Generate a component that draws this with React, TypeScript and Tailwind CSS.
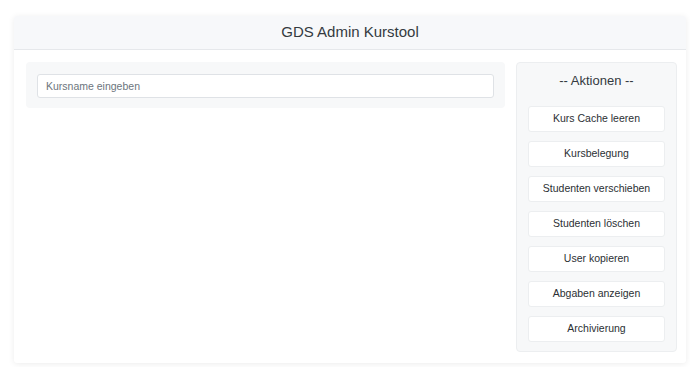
const actions = [
  'Kurs Cache leeren',
  'Kursbelegung',
  'Studenten verschieben',
  'Studenten löschen',
  'User kopieren',
  'Abgaben anzeigen',
  'Archivierung',
];

const App = () => {
  return (
    <div className="min-h-[367px] bg-white pt-[16px] pl-[14px] font-['Liberation_Sans',Arial,sans-serif]">
      <div className="w-[672px] h-[347px] bg-white rounded-[3px] shadow-[0_1px_6px_rgba(0,0,0,0.08)] flex flex-col">
        <div className="h-[34px] bg-[#f7f8fa] border-b border-[#e6e8eb] flex items-center justify-center rounded-t-[3px]">
          <h1 className="text-[15px] text-[#343a40]">GDS Admin Kurstool</h1>
        </div>

        <div className="flex gap-[11px] pt-[12px] pl-[12px] pr-[9px]">
          <div className="w-[479px] h-[46px] bg-[#f7f8f9] rounded-[4px] p-[11px]">
            <input
              type="text"
              placeholder="Kursname eingeben"
              className="w-full h-[24px] bg-white border border-[#dfe2e6] rounded-[3px] px-[8px] text-[10.5px] text-[#495057] placeholder:text-[#6c757d] outline-none"
            />
          </div>

          <div className="w-[161px] h-[290px] bg-[#f7f8f9] border border-[#eceef0] rounded-[4px] px-[11px] pt-[4px] flex flex-col">
            <div className="h-[28px] mb-[11px] flex items-center justify-center text-[13px] text-[#343a40]">
              -- Aktionen --
            </div>
            <div className="flex flex-col gap-[9px]">
              {actions.map((a) => (
                <button
                  key={a}
                  className="h-[26px] w-full bg-white border border-[#eceef0] rounded-[3px] text-[10.5px] text-[#2b2f33] flex items-center justify-center"
                >
                  {a}
                </button>
              ))}
            </div>
          </div>
        </div>
      </div>
    </div>
  );
};

export default App;
